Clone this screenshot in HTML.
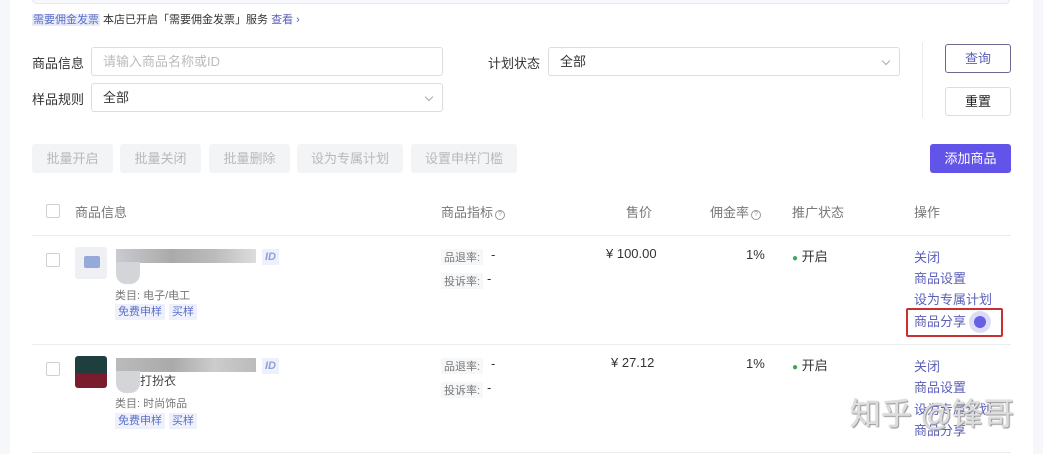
<!DOCTYPE html>
<html><head><meta charset="utf-8"><style>
*{margin:0;padding:0;box-sizing:border-box}
body{width:1043px;height:454px;overflow:hidden;background:#fff;font-family:"Liberation Sans","Noto Sans CJK SC",sans-serif;font-size:13px;color:#333;position:relative}
.a{position:absolute;white-space:nowrap}
.inp{position:absolute;border:1px solid #dcdde2;border-radius:3px;height:29px;background:#fff;padding:0 11px;line-height:27px;font-size:13px}
.chev{position:absolute;right:10px;top:10px;width:6px;height:6px;border-right:1px solid #aaa;border-bottom:1px solid #aaa;transform:rotate(45deg)}
.dbtn{position:absolute;top:144px;height:29px;background:#f3f4f6;border-radius:3px;color:#b8b9bd;line-height:29px;text-align:center;font-size:13px}
.cb{position:absolute;width:14px;height:14px;border:1px solid #cfd0d4;border-radius:2px;background:#fff}
.line{position:absolute;left:32px;width:979px;height:1px;background:#ebecef}
.h{color:#777;font-size:13px}
.tag{position:absolute;background:#eef1fb;color:#5a6fc8;font-size:11px;padding:0 3px;line-height:16px}
.g{color:#777;font-size:11px}
.lk{color:#5b5fb8;font-size:13px}
.q{display:inline-block;width:10px;height:10px;border:1px solid #999;border-radius:50%;font-size:7px;line-height:8px;text-align:center;color:#999;vertical-align:1px;margin-left:2px}
</style></head><body>
<div class="a" style="left:0;top:0;width:10px;height:454px;background:#f5f7fa"></div>
<div class="a" style="left:1033px;top:0;width:10px;height:454px;background:#f5f7fa"></div>
<div class="a" style="left:32px;top:-4px;width:978px;height:8px;background:#f7f8fc;border:1px solid #e8e9f2;border-radius:4px"></div>

<div class="a" style="left:32px;top:13px;font-size:11px;line-height:15px"><span style="background:#e9ecf8;color:#5a6fc8;padding:0 1px">需要佣金发票</span> 本店已开启「需要佣金发票」服务 <span style="color:#5b5fb8">查看 ›</span></div>

<div class="a" style="left:32px;top:53px">商品信息</div>
<div class="inp" style="left:91px;top:47px;width:352px;color:#bbb">请输入商品名称或ID</div>
<div class="a" style="left:32px;top:89px">样品规则</div>
<div class="inp" style="left:91px;top:83px;width:352px">全部<span class="chev"></span></div>
<div class="a" style="left:488px;top:53px">计划状态</div>
<div class="inp" style="left:548px;top:47px;width:352px">全部<span class="chev"></span></div>
<div class="a" style="left:922px;top:42px;width:1px;height:76px;background:#ececef"></div>
<div class="a" style="left:945px;top:44px;width:66px;height:29px;border:1px solid #6a6a90;border-radius:3px;color:#5b5fb8;text-align:center;line-height:27px">查询</div>
<div class="a" style="left:945px;top:87px;width:66px;height:29px;border:1px solid #dcdde2;border-radius:3px;color:#222;text-align:center;line-height:27px">重置</div>

<div class="dbtn" style="left:32px;width:81px">批量开启</div>
<div class="dbtn" style="left:120px;width:81px">批量关闭</div>
<div class="dbtn" style="left:209px;width:81px">批量删除</div>
<div class="dbtn" style="left:297px;width:106px">设为专属计划</div>
<div class="dbtn" style="left:411px;width:106px">设置申样门槛</div>
<div class="a" style="left:930px;top:144px;width:81px;height:29px;background:#6254e8;border-radius:3px;color:#fff;text-align:center;line-height:29px">添加商品</div>

<div class="cb" style="left:46px;top:204px"></div>
<div class="a h" style="left:75px;top:202px">商品信息</div>
<div class="a h" style="left:441px;top:202px">商品指标<span class="q">?</span></div>
<div class="a h" style="left:626px;top:202px">售价</div>
<div class="a h" style="left:710px;top:202px">佣金率<span class="q">?</span></div>
<div class="a h" style="left:792px;top:202px">推广状态</div>
<div class="a h" style="left:914px;top:202px">操作</div>
<div class="line" style="top:235px"></div>

<!-- row 1 -->
<div class="cb" style="left:46px;top:253px"></div>
<div class="a" style="left:75px;top:247px;width:32px;height:32px;background:#eef0f4;border-radius:3px"><div style="margin:9px 0 0 9px;width:16px;height:12px;background:#6f8ad0;border-radius:2px;opacity:.7"></div></div>
<div class="a" style="left:116px;top:249px;width:140px;height:14px;background:linear-gradient(90deg,#c9cbcf,#aaa 40%,#bbb 70%,#ddd)"></div>
<div class="a" style="left:116px;top:262px;width:24px;height:22px;background:#d4d5d8;border-radius:0 0 10px 10px"></div>
<div class="tag" style="left:262px;top:249px;font-style:italic;font-weight:bold;color:#8ea0d8">ID</div>
<div class="a g" style="left:115px;top:287px">类目: 电子/电工</div>
<div class="tag" style="left:115px;top:304px">免费申样</div>
<div class="tag" style="left:169px;top:304px">买样</div>
<div class="a g" style="left:441px;top:249px;background:#f6f7f9;padding:0 3px">品退率:</div><div class="a" style="left:491px;top:247px">-</div>
<div class="a g" style="left:441px;top:273px;background:#f6f7f9;padding:0 3px">投诉率:</div><div class="a" style="left:487px;top:271px">-</div>
<div class="a" style="left:606px;top:246px">¥ 100.00</div>
<div class="a" style="left:746px;top:247px">1%</div>
<div class="a" style="left:792px;top:246px"><span style="color:#3aaa5a;font-size:10px">●</span> 开启</div>
<div class="a lk" style="left:914px;top:247px">关闭</div>
<div class="a lk" style="left:914px;top:268px">商品设置</div>
<div class="a lk" style="left:914px;top:289px">设为专属计划</div>
<div class="a lk" style="left:914px;top:311px">商品分享</div>
<div class="a" style="left:906px;top:308px;width:97px;height:29px;border:2px solid #c8302e;border-radius:2px"></div>
<div class="a" style="left:969px;top:311px;width:22px;height:22px;border-radius:50%;background:#dcdcf6"></div>
<div class="a" style="left:974px;top:316px;width:12px;height:12px;border-radius:50%;background:#6660e6"></div>
<div class="line" style="top:344px"></div>

<!-- row 2 -->
<div class="cb" style="left:46px;top:362px"></div>
<div class="a" style="left:75px;top:356px;width:32px;height:32px;border-radius:3px;background:linear-gradient(#1f3e3e 55%,#7a1c2c 55%)"></div>
<div class="a" style="left:116px;top:358px;width:140px;height:14px;background:linear-gradient(90deg,#bbb,#aaa 40%,#ccc 70%,#bbb)"></div>
<div class="a" style="left:116px;top:371px;width:24px;height:22px;background:#d4d5d8;border-radius:0 0 10px 10px"></div>
<div class="a" style="left:140px;top:372px;font-size:12px;color:#444">打扮衣</div>
<div class="tag" style="left:262px;top:358px;font-style:italic;font-weight:bold;color:#8ea0d8">ID</div>
<div class="a g" style="left:115px;top:395px">类目: 时尚饰品</div>
<div class="tag" style="left:115px;top:413px">免费申样</div>
<div class="tag" style="left:169px;top:413px">买样</div>
<div class="a g" style="left:441px;top:358px;background:#f6f7f9;padding:0 3px">品退率:</div><div class="a" style="left:491px;top:356px">-</div>
<div class="a g" style="left:441px;top:382px;background:#f6f7f9;padding:0 3px">投诉率:</div><div class="a" style="left:487px;top:380px">-</div>
<div class="a" style="left:611px;top:355px">¥ 27.12</div>
<div class="a" style="left:746px;top:356px">1%</div>
<div class="a" style="left:792px;top:355px"><span style="color:#3aaa5a;font-size:10px">●</span> 开启</div>
<div class="a lk" style="left:914px;top:356px">关闭</div>
<div class="a lk" style="left:914px;top:377px">商品设置</div>
<div class="a lk" style="left:914px;top:399px">设为专属计划</div>
<div class="a lk" style="left:914px;top:420px">商品分享</div>
<div class="a" style="left:850px;top:389px;font-size:31px;color:rgba(235,235,235,.85);text-shadow:0 0 1px #888,1px 1px 1px #999">知乎 @锋哥</div>
<div class="line" style="top:452px"></div>
</body></html>
